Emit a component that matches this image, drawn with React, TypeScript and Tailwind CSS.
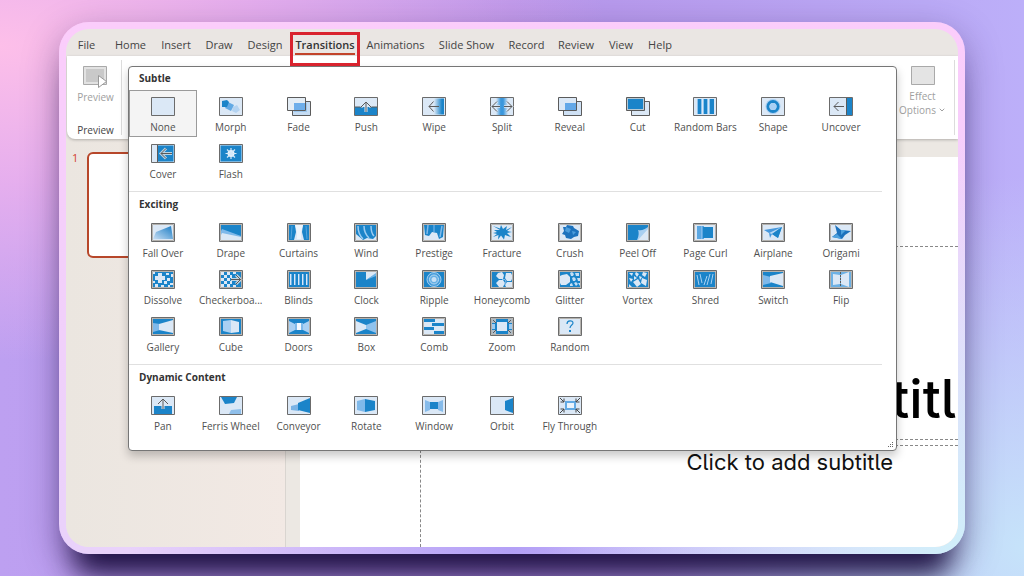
import { useState } from "react";
import type { ReactNode } from "react";
import { ChevronDown } from "lucide-react";
import clsx from "clsx";

const DARK = "#1b84c9";
const MID = "#7fb9ea";
const PALE = "#dbe8f6";
const INK = "#5b5b5b";

interface Transition {
  name: string;
  art: ReactNode;
  bare?: boolean;
}

interface Section {
  title: string;
  framed?: boolean;
  items: Transition[];
}

const TABS = [
  { name: "File", width: "w-[41px]" },
  { name: "Home", width: "w-[47px]" },
  { name: "Insert", width: "w-[44px]" },
  { name: "Draw", width: "w-[42px]" },
  { name: "Design", width: "w-[50px]" },
  { name: "Transitions", width: "w-[70px]" },
  { name: "Animations", width: "w-[71px]" },
  { name: "Slide Show", width: "w-[71px]" },
  { name: "Record", width: "w-[49px]" },
  { name: "Review", width: "w-[50px]" },
  { name: "View", width: "w-[40px]" },
  { name: "Help", width: "w-[38px]" },
];

function Fill({ color = DARK }: { color?: string }) {
  return <path d="M2 2h20v15H2z" fill={color} />;
}

const SUBTLE: Transition[] = [
  { name: "None", art: null },
  {
    name: "Morph",
    art: (
      <>
        <path d="m14 10 4-2 3 5-4 3-4-2z" fill="#b4d3f1" />
        <path d="m9 5 6 3-3 6-6-3z" fill="#62a9e4" />
        <path d="m3 4 5-1 2 2-2 5H3z" fill={DARK} />
      </>
    ),
  },
  {
    name: "Fade",
    bare: true,
    art: (
      <>
        <path d="M5.5 4.5h18v14h-18z" fill="#c5dcf3" stroke={INK} />
        <path d="M.5.5h18v13H.5z" fill="#e4edf5" stroke={INK} />
        <path d="M7 6h11v7H7z" fill="#6eaeea" />
        <path d="M19 6h1v9H7v-1h12z" fill="#9cc8ef" />
      </>
    ),
  },
  {
    name: "Push",
    art: (
      <>
        <path d="M1 10h22v8H1z" fill={DARK} />
        <path d="M1 10h8M15 10h8" stroke={INK} />
        <path d="M12 15V5M7 10l5-5 5 5" stroke={PALE} strokeWidth="3" fill="none" />
        <path d="M12 15V5M7 10l5-5 5 5" stroke={INK} fill="none" />
      </>
    ),
  },
  {
    name: "Wipe",
    art: (
      <>
        <path d="M12 1.500h10v16H12z" fill="url(#wipe)" />
        <path d="M17 9.500H7M11.500 4.500 7 9.500l4.500 5" stroke={INK} fill="none" />
      </>
    ),
  },
  {
    name: "Split",
    art: (
      <>
        <path d="M6 1h12v17H6z" fill="url(#split)" />
        <path d="M10 9.500H2M7 4.500 2 9.500l5 5M14 9.500h8M17 4.500l5 5-5 5" stroke={PALE} strokeWidth="2.500" fill="none" />
        <path d="M10 9.500H2M7 4.500 2 9.500l5 5M14 9.500h8M17 4.500l5 5-5 5" stroke={INK} fill="none" />
      </>
    ),
  },
  {
    name: "Reveal",
    bare: true,
    art: (
      <>
        <path d="M5.500 4.500h18v14h-18z" fill="#cfe1f5" stroke={INK} />
        <path d="M.5.5h18v13H.5z" fill={PALE} stroke={INK} />
        <path d="M7 6h11v7H7z" fill="#63a8e8" />
      </>
    ),
  },
  {
    name: "Cut",
    bare: true,
    art: (
      <>
        <path d="M5.500 4.500h18v14h-18z" fill={PALE} stroke={INK} />
        <path d="M.5.5h18v13H.5z" fill="#b5c9d6" stroke={INK} />
        <path d="M2 2h15v10H2z" fill={DARK} />
      </>
    ),
  },
  {
    name: "Random Bars",
    art: (
      <>
        <path d="M5 2h3v15H5zM11 2h3v15h-3zM17 2h4v15h-4z" fill={DARK} />
        <path d="M4 2h1v15H4zM8 2h1v15H8zM10 2h1v15h-1zM14 2h1v15h-1zM16 2h1v15h-1z" fill="#8fc4ee" />
      </>
    ),
  },
  {
    name: "Shape",
    art: (
      <>
        <circle cx="12" cy="9.500" r="7.500" fill="#a7cdf0" />
        <circle cx="12" cy="9.500" r="5" fill={PALE} stroke={DARK} strokeWidth="3" />
        <circle cx="12" cy="9.500" r="3.500" fill="#a9d0f4" />
      </>
    ),
  },
  {
    name: "Uncover",
    art: (
      <>
        <path d="M18 1h5v17h-5z" fill={DARK} />
        <path d="M17.500 1v17M15 9.500H5M9.500 5 5 9.500 9.500 14" stroke={INK} fill="none" />
      </>
    ),
  },
  {
    name: "Cover",
    art: (
      <>
        <path d="M7 1.500h15.500v16H7z" fill={DARK} />
        <path d="M6.500 1v17" stroke={INK} />
        <path d="M21 9.500H10M15 4.500l-5 5 5 5" stroke="#b9d3e4" strokeWidth="3" fill="none" />
        <path d="M21 9.500H10M15 4.500l-5 5 5 5" stroke={INK} fill="none" />
      </>
    ),
  },
  {
    name: "Flash",
    art: (
      <>
        <path d="M1.500 1.500h21v16h-21z" fill={DARK} />
        <circle cx="12" cy="9.500" r="3.500" fill="#f0f7fd" />
        <path d="M12 4v11M6.500 9.500h11M8 5.500l8 8M16 5.500l-8 8" stroke="#d5e8f8" strokeWidth="1.200" />
      </>
    ),
  },
];

const EXCITING: Transition[] = [
  { name: "Fall Over", art: <path d="m5 9 15-6 2 13H2z" fill="url(#fall)" /> },
  {
    name: "Drape",
    art: (
      <>
        <Fill />
        <path d="M3 6 22 13v4H2V8z" fill={MID} />
        <path d="m3 10 19 4v3H2v-5z" fill={PALE} />
      </>
    ),
  },
  {
    name: "Curtains",
    art: (
      <>
        <path d="M2 2h6l1 7-2 8H2zM16 2h6v15h-5l-2-8z" fill={DARK} />
        <path d="M8 2h8l-2 7v7h-4V9z" fill="#eef5fc" />
        <path d="M5 3 4 16M19 3l1 13" stroke="#55a5dd" />
      </>
    ),
  },
  {
    name: "Wind",
    art: (
      <>
        <path d="M2 2h20v11l-3 3-6-1-4 2-7-6z" fill={DARK} />
        <path d="M4 3c0 6 2 10 5 13M10 3c0 6 2 9 5 12M17 3c0 5 1 8 3 10" stroke="#9bcbf1" strokeWidth="1.500" fill="none" />
      </>
    ),
  },
  {
    name: "Prestige",
    art: (
      <>
        <path d="M2 2h20l-1 12-4 2-2-6-5-1-3 4-4-1z" fill={DARK} />
        <path d="M6 2 5 11M20 3l-2 11" stroke={MID} strokeWidth="1.500" />
        <path d="M12 2v7" stroke="#4ea0dc" strokeWidth="2" />
      </>
    ),
  },
  {
    name: "Fracture",
    art: (
      <path d="M10 7 3 3l7 2.500L11 2l2 4 4-3-1 4 6-3-5 4 5 1-5 1 4 4-6-2-1 4.500-3-4-3 4 .5-4.500L3 14l4-3-4-1 4-1-3-2z" fill={DARK} />
    ),
  },
  {
    name: "Crush",
    art: (
      <>
        <path d="m5 4 3 0 1-2 6 1 1 2 5 3-1 5-4 1-3 2-5-1-1-3-3-1 2-3z" fill="#1c72bd" />
        <path d="m8 4 5 2-2 4-4-2zM14 8l4 1-3 3z" fill="#4b9ddc" />
      </>
    ),
  },
  {
    name: "Peel Off",
    art: (
      <>
        <Fill />
        <path d="M11 17C13 13 13 9 12 7c4 1 7-1 10-3v13z" fill="#a8cff1" />
        <path d="m12 17 10-11v11z" fill={PALE} />
      </>
    ),
  },
  {
    name: "Page Curl",
    art: (
      <>
        <path d="M4 3h7v13H4z" fill="#5ba7e2" />
        <path d="M10 4h10v11H10z" fill={DARK} />
        <path d="M8.500 3v13" stroke={MID} />
      </>
    ),
  },
  {
    name: "Airplane",
    art: (
      <>
        <path d="m3 7 18-3-4 11-6-4-2 4-1-5z" fill="#4798dc" />
        <path d="M8 10 21 4 11 11z" fill="#b7d7f3" />
        <path d="m11 11 10-7-4 11z" fill={DARK} />
      </>
    ),
  },
  {
    name: "Origami",
    art: (
      <>
        <path d="m6 2 6 5 10 1-6 4-3 4-10-2 5-4z" fill="#1c72bd" />
        <path d="m12 7 5 0-5 5zM3 14l5-3 5 5z" fill="#4da1de" />
      </>
    ),
  },
  {
    name: "Dissolve",
    art: (
      <>
        <Fill />
        <path d="M7 3h4v3h3v4h-3v3H7v-3H4V6h3zM15 3h3v2h-3zM16 8h3v3h-3zM13 11h3v3h-3zM2 11h2v2H2zM4 14h3v3H4zM10 15h3v2h-3zM19 13h3v2h-3zM20 4h2v3h-2zM2 2h2v2H2zM17 15h2v2h-2z" fill={PALE} />
      </>
    ),
  },
  {
    name: "Checkerboard",
    art: (
      <>
        <Fill />
        <path d="M2 2h3v3H2zM8 2h3v3H8zM5 5h3v3H5zM2 8h3v3H2zM8 8h3v3H8zM5 11h3v3H5zM11 5h2v3h-2zM11 11h2v3h-2zM2 14h3v3H2zM8 14h3v3H8zM14 2h3v2h-3zM14 15h3v2h-3z" fill={PALE} />
        <path d="M12 9.500h10M17 5l4.500 4.500L17 14" stroke="#c1d4df" strokeWidth="3" fill="none" />
        <path d="M12 9.500h10M17 5l4.500 4.500L17 14" stroke={INK} fill="none" />
      </>
    ),
  },
  {
    name: "Blinds",
    art: (
      <>
        <Fill />
        <path d="M3 4h1v11H3zM7 4h1v11H7zM11 4h1v11h-1zM15 4h1v11h-1zM19 4h1v11h-1z" fill={PALE} />
        <path d="M4 4h1v11H4zM8 4h1v11H8zM12 4h1v11h-1zM16 4h1v11h-1zM20 4h1v11h-1z" fill="#6db1e6" />
      </>
    ),
  },
  {
    name: "Clock",
    art: (
      <>
        <Fill />
        <path d="M12 2h10v2l-10 6z" fill={PALE} />
        <path d="m22 3-10 7 10-4z" fill="#6eb2e5" />
      </>
    ),
  },
  {
    name: "Ripple",
    art: (
      <>
        <Fill />
        <circle cx="12" cy="9.500" r="7" fill="#469cda" stroke="#a2cef1" />
        <circle cx="12" cy="9.500" r="4.500" fill="#67afe3" stroke="#b5d9f5" />
        <circle cx="12" cy="9.500" r="2.500" fill="#c7e0f6" />
      </>
    ),
  },
  {
    name: "Honeycomb",
    art: (
      <>
        <Fill />
        <path d="m8 3 4-1 2 3-1 4H9L6 6zM16 3h5l1 2v4l-1 2h-4l-2-3zM9 10h4l2 3-2 4H9l-3-4zM17 12h5v5h-6l-1-2z" fill={PALE} />
        <path d="m12 9.500 3 0 1 2.500-1.500 3" stroke={MID} fill="none" />
      </>
    ),
  },
  {
    name: "Glitter",
    art: (
      <>
        <Fill />
        <path d="m4 5 5-1 3 3v5l-4 3H3l-1-2V6z" fill={PALE} />
        <path d="m12 3 2-1 2 2-1 2h-2zM17 3h4v3h-3zM14 8l2-1 2 2-1 2h-2zM19 8h3v3h-2zM16 13l2-1 2 2-2 2zM12 14l2-1 1 3h-3zM20 13h2v3z" fill="#c4def5" />
      </>
    ),
  },
  {
    name: "Vortex",
    art: (
      <>
        <Fill />
        <path d="m3 3 4 0-1 3zM10 2l3 2-2 3-2-3zM17 2l4 1-2 4-3-2zM3 8l4 1-2 3zM7 12l5-3 3 5-4 3zM16 8l5 2-1 6-5-3zM3 14l3 3H3zM8 6l3 2-3 2zM13 6l3 1-2 3z" fill={PALE} />
      </>
    ),
  },
  {
    name: "Shred",
    art: (
      <>
        <Fill />
        <path d="m4 5 2 10M7 4l2 9M11 15l3-9M14 15l3-11M18 14l2-10" stroke="#a8d2f3" fill="none" />
      </>
    ),
  },
  {
    name: "Switch",
    art: (
      <>
        <Fill />
        <path d="m2 5 8 2v6l-8 2z" fill={MID} />
        <path d="m9 6 13-3v13L9 12z" fill={PALE} />
      </>
    ),
  },
  {
    name: "Flip",
    art: (
      <>
        <Fill color="#6db1e4" />
        <path d="m4 4 7 1v9l-7 1zM12 5l8-3v15l-8-3z" fill={PALE} />
        <path d="M11.500 2v15" stroke={INK} strokeDasharray="2 1" />
      </>
    ),
  },
  {
    name: "Gallery",
    art: (
      <>
        <Fill />
        <path d="m2 6 7 1v6l-7 2z" fill={MID} />
        <path d="m8 7 14-4v13L8 13z" fill={PALE} />
      </>
    ),
  },
  {
    name: "Cube",
    art: (
      <>
        <Fill />
        <path d="m4 4 8-1v13l-8-2z" fill="#a9d0f3" />
        <path d="m12 3 8 2v10l-8 1z" fill={PALE} />
      </>
    ),
  },
  {
    name: "Doors",
    art: (
      <>
        <Fill />
        <path d="m2 4 6 3v6l-6 3zM22 4l-6 3v6l6 3z" fill="#a9d0f3" />
        <path d="M8 6h8v7H8z" fill={MID} />
        <path d="M10 6h4v7h-4z" fill="#f4f9fe" />
      </>
    ),
  },
  {
    name: "Box",
    art: (
      <>
        <Fill />
        <path d="m2 4 10 4v4L2 16z" fill={PALE} />
        <path d="m22 4-10 4v4l10 4z" fill="#8fc2ed" />
      </>
    ),
  },
  {
    name: "Comb",
    art: <path d="M2 2h11v3H2zM10 6h12v3H10zM2 10h10v3H2zM12 14h10v3H12z" fill={DARK} />,
  },
  {
    name: "Zoom",
    art: (
      <>
        <Fill />
        <path d="M2 2h4v4H2zM18 2h4v4h-4zM2 13h4v4H2zM18 13h4v4h-4z" fill="#aebdc9" />
        <path d="m3 3 3 3M21 3l-3 3M3 16l3-3M21 16l-3-3" stroke={INK} />
        <path d="M2 7h3v5H2zM19 7h3v5h-3z" fill="#9fcbf0" />
        <path d="M7 5h10v9H7z" fill={PALE} />
      </>
    ),
  },
  {
    name: "Random",
    art: (
      <>
        <path d="M9 7c0-4 6-4 6-1 0 2-3 2-3 5" stroke={DARK} fill="none" strokeWidth="1.200" />
        <path d="M11 13h2v2h-2z" fill={DARK} />
      </>
    ),
  },
];

const DYNAMIC: Transition[] = [
  {
    name: "Pan",
    art: (
      <>
        <path d="M3 10h18v8H3z" fill={DARK} />
        <path d="M12 13V3M7 8l5-5 5 5" stroke={PALE} strokeWidth="3" fill="none" />
        <path d="M12 13V3M7 8l5-5 5 5" stroke={INK} fill="none" />
      </>
    ),
  },
  {
    name: "Ferris Wheel",
    art: (
      <>
        <path d="M2 1h16l-3 6-9 1z" fill={DARK} />
        <path d="m12 14 10-1v5H10z" fill="#8fbfea" />
      </>
    ),
  },
  {
    name: "Conveyor",
    art: (
      <>
        <path d="m4 10 8-2v7l-8-1z" fill="#7ab3e5" />
        <path d="m11 7 12-5v15l-12-3z" fill={DARK} />
      </>
    ),
  },
  {
    name: "Rotate",
    art: (
      <>
        <path d="m3 5 8-2v13l-8-2z" fill={MID} />
        <path d="m11 3 10 2v9l-10 2z" fill={DARK} />
      </>
    ),
  },
  {
    name: "Window",
    art: (
      <>
        <path d="m3 4 5 2v8l-5 2zM21 4l-5 2v8l5 2z" fill="#86bbea" />
        <path d="M8 6h8v7H8z" fill={DARK} />
      </>
    ),
  },
  { name: "Orbit", art: <path d="m15 5 8-3v15l-8-3z" fill={DARK} /> },
  {
    name: "Fly Through",
    art: (
      <>
        <path d="M8 6h9v7H8z" fill="#eaf3fc" stroke="#62aae4" strokeWidth="2" />
        <path d="m2 2 4 4M6 2.500V6H2.500M22 2l-4 4M18 2.500V6h3.500M2 17l4-4M6 16.500V13H2.500M22 17l-4-4M18 16.500V13h3.500" stroke="#444" fill="none" />
      </>
    ),
  },
];

const SECTIONS: Section[] = [
  { title: "Subtle", items: SUBTLE },
  { title: "Exciting", framed: true, items: EXCITING },
  { title: "Dynamic Content", items: DYNAMIC },
];

function TransitionIcon({ item, framed }: { item: Transition; framed?: boolean }) {
  return (
    <svg viewBox="0 0 24 19" className="h-[19px] w-6 shrink-0" aria-hidden="true">
      {!item.bare && <path d="M.5.5h23v18H.5z" fill={PALE} stroke="#6b6b6b" />}
      {item.art}
      {framed && <path d="M1.500 1.500h21v16h-21z" fill="none" stroke="#b4b2ae" />}
    </svg>
  );
}

function Gradients() {
  return (
    <svg className="absolute size-0" aria-hidden="true">
      <defs>
        <linearGradient id="wipe">
          <stop offset="0" stopColor={PALE} />
          <stop offset=".8" stopColor={DARK} />
        </linearGradient>
        <linearGradient id="split">
          <stop offset="0" stopColor={PALE} />
          <stop offset=".4" stopColor="#3a97dc" />
          <stop offset=".6" stopColor="#3a97dc" />
          <stop offset="1" stopColor={PALE} />
        </linearGradient>
        <linearGradient id="fall" x1="0" y1="1" x2="1" y2="0">
          <stop offset="0" stopColor="#c7def4" />
          <stop offset="1" stopColor="#1a7cc4" />
        </linearGradient>
      </defs>
    </svg>
  );
}

function Gallery() {
  const [selected, setSelected] = useState("None");

  return (
    <div className="absolute top-[37px] right-[61px] left-[62px] rounded border border-[#767676] bg-white pb-[14px] shadow-[0_5px_10px_rgba(0,0,0,0.22)]">
      {SECTIONS.map((section, index) => (
        <section
          key={section.title}
          className={clsx(index > 0 && "mt-[7px]")}
          aria-label={section.title}
        >
          {index > 0 && <hr className="mr-[14px] border-[#e0e0e0]" />}
          <h2
            className={clsx(
              "flex items-center pl-[10px] text-[10px] font-bold text-[#333]",
              index > 0 ? "h-6" : "h-[23px]"
            )}
          >
            {section.title}
          </h2>
          <div className="mr-[21px] grid grid-cols-11">
            {section.items.map((item) => (
              <button
                key={item.name}
                type="button"
                aria-pressed={selected === item.name}
                onClick={() => setSelected(item.name)}
                className={clsx(
                  "flex h-[47px] flex-col items-center gap-[3px] border pt-[6px] text-[10px] leading-4 whitespace-nowrap text-[#505050]",
                  selected === item.name ? "border-[#9a9a9a] bg-[#f4f4f4]" : "border-transparent"
                )}
              >
                <TransitionIcon item={item} framed={section.framed} />
                {item.name === "Checkerboard" ? "Checkerboa..." : item.name}
              </button>
            ))}
          </div>
        </section>
      ))}
      <svg viewBox="0 0 6 6" className="absolute right-[2px] bottom-[2px] size-[6px]" aria-hidden="true">
        <path d="M4 0h1v1H4zM2 2h1v1H2zM4 2h1v1H4zM0 4h1v1H0zM2 4h1v1H2zM4 4h1v1H4z" fill="#666" />
      </svg>
    </div>
  );
}

function TabBar() {
  return (
    <nav className="flex h-[27px] items-end text-[11px] text-[#444]" aria-label="Ribbon tabs">
      {TABS.map((tab) =>
        tab.name === "Transitions" ? (
          <div
            key={tab.name}
            className="relative z-10 -mb-[10px] flex h-[34px] w-[70px] shrink-0 justify-center border-[3px] border-[#d9232e] pt-[2px]"
          >
            <button type="button" className="h-[18px] border-b-2 border-[#c2432a] font-semibold leading-4 text-[#333]">
              {tab.name}
            </button>
          </div>
        ) : (
          <button key={tab.name} type="button" className={clsx("h-[22px] shrink-0 leading-4", tab.width)}>
            {tab.name}
          </button>
        )
      )}
    </nav>
  );
}

function Ribbon() {
  return (
    <div className="relative ml-px flex h-[83px] justify-between rounded-bl-lg bg-white text-[10px] shadow-[0_1px_3px_rgba(0,0,0,0.25)]">
      <div className="my-1 flex w-[55px] flex-col items-center justify-between border-r border-[#dcdcdc] pt-[6px] pl-[3px] text-[#444]">
        <button type="button" className="flex flex-col items-center gap-px text-[#a0a0a0]">
          <svg viewBox="0 0 26 23" className="h-[23px] w-[26px]" aria-hidden="true">
            <path d="M1.500.5h23v18h-23z" fill="#e2e2e2" stroke="#a9a9a9" />
            <path d="M4 3h18v13H4z" fill="#c9c9c9" />
            <path d="m16.500 9.500 8 6-8 6z" fill="#fff" stroke="#999" />
          </svg>
          Preview
        </button>
        <span className="leading-[10px]">Preview</span>
      </div>
      <div className="my-1 mr-[3px] flex w-[64px] flex-col border-r border-[#dcdcdc] pt-[6px]">
        <button type="button" className="flex flex-col items-center text-[#a0a0a0]">
          <svg viewBox="0 0 24 19" className="mb-1 h-[19px] w-6" aria-hidden="true">
            <path d="M.5.5h23v18H.5z" fill="#e4e4e4" stroke="#a9a9a9" />
          </svg>
          <span className="leading-[14px]">Effect</span>
          <span className="flex items-center gap-[2px] leading-[14px]">
            Options <ChevronDown className="size-2" strokeWidth={3} />
          </span>
        </button>
      </div>
    </div>
  );
}

function Editor() {
  return (
    <main className="flex flex-1">
      <aside className="flex w-[220px] items-start gap-[9px] border-r border-[#d9d5d0] bg-linear-to-r from-[#ebe6e0] to-[#f2e9e4] pt-[13px] pl-[6px]">
        <span className="text-[11px] leading-3 text-[#d2402f]">1</span>
        <div className="h-[106px] flex-1 rounded-md border-2 border-[#b7472a] bg-white" />
      </aside>
      <div className="flex min-w-0 flex-1 flex-col bg-[#ece8e3] pt-[18px] pl-[14px]">
        <div className="flex flex-1 flex-col gap-[5px] bg-white pt-[89px] pl-[120px] font-[Inter,sans-serif] whitespace-nowrap text-black [font-feature-settings:'cv05']">
          <div className="flex h-[194px] items-end justify-end border-y border-l border-dashed border-[#888] pr-[2px] pb-[10px]">
            <h1 className="text-[53px] leading-[60px] font-medium">titl</h1>
          </div>
          <div className="flex-1 border-t border-l border-dashed border-[#888] pr-[65px] text-right text-[22px] leading-8 text-[#111]">
            Click to add subtitle
          </div>
        </div>
      </div>
    </main>
  );
}

export default function App() {
  return (
    <div className="flex min-h-screen bg-[radial-gradient(ellipse_at_0%_8%,#fdbfe9_0%,#f0b2edcc_18%,transparent_42%),radial-gradient(circle_at_100%_95%,#c6e3fa_0%,transparent_32%),linear-gradient(90deg,#bda0f1,#b795ea_50%,#bcaff9)] px-[59px] pt-[22px] pb-[22px] font-['Open_Sans','Noto_Sans',sans-serif]">
      <Gradients />
      <div className="flex min-w-0 flex-1 rounded-[30px] bg-[radial-gradient(circle_at_100%_100%,#d0effa_0%,transparent_40%),radial-gradient(ellipse_at_50%_100%,#b3a0f6_0%,transparent_60%),linear-gradient(180deg,#fbcdfb,#e9d2fb)] p-[7px] shadow-[0_12px_36px_rgba(40,20,80,0.4),0_36px_28px_-16px_rgba(15,5,50,0.9)]">
        <div className="relative flex min-w-0 flex-1 flex-col overflow-hidden rounded-[23px] bg-[#eae6e3]">
          <TabBar />
          <Ribbon />
          <Editor />
          <Gallery />
        </div>
      </div>
    </div>
  );
}
